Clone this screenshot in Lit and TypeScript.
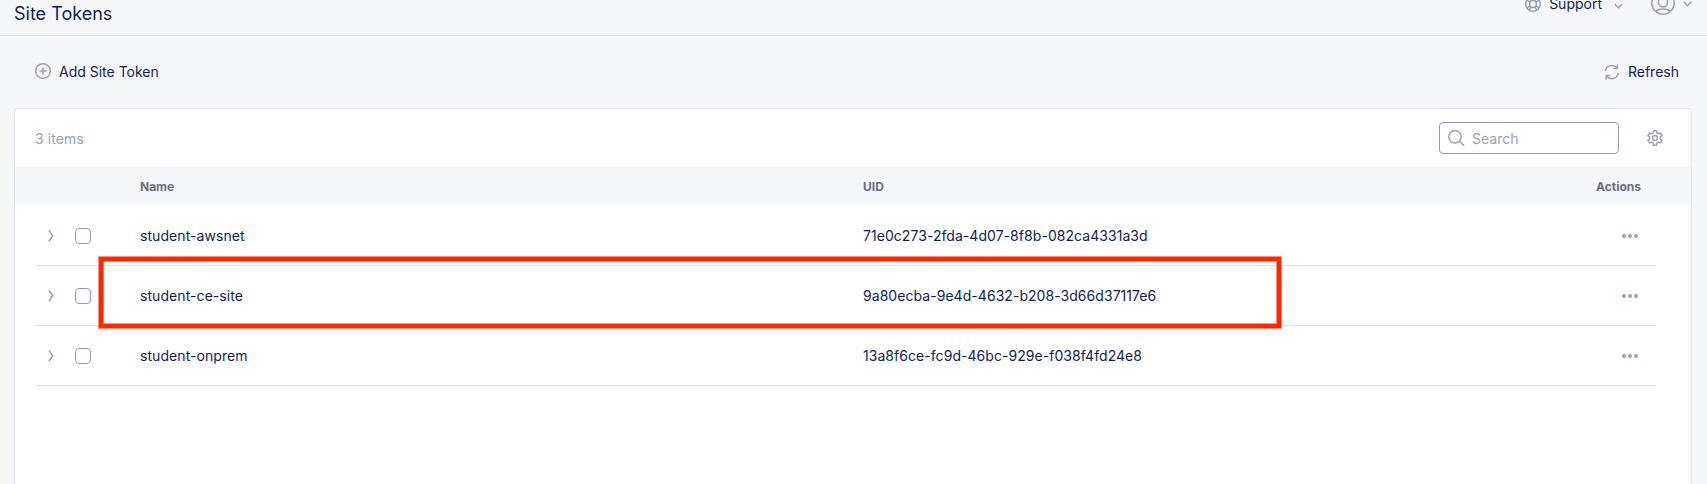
import { LitElement, html, css, svg } from "lit";
import { customElement, property } from "lit/decorators.js";

interface Token {
  name: string;
  uid: string;
}

const TOKENS: Token[] = [
  { name: "student-awsnet", uid: "71e0c273-2fda-4d07-8f8b-082ca4331a3d" },
  { name: "student-ce-site", uid: "9a80ecba-9e4d-4632-b208-3d66d37117e6" },
  { name: "student-onprem", uid: "13a8f6ce-fc9d-46bc-929e-f038f4fd24e8" },
];

// Outline of the six-toothed settings gear, centred on (8, 8).
function gearPath(): string {
  const teeth = 6;
  const pts: string[] = [];
  for (let i = 0; i < teeth; i++) {
    const mid = (i / teeth) * 360 - 90;
    for (const [off, r] of [[-19, 5.5], [-12, 7.4], [12, 7.4], [19, 5.5]]) {
      const a = ((mid + off) * Math.PI) / 180;
      pts.push(`${(8 + r * Math.cos(a)).toFixed(2)} ${(8 + r * Math.sin(a)).toFixed(2)}`);
    }
  }
  return `M${pts.join("L")}Z`;
}

const ICONS = {
  plus: svg`<circle cx="8" cy="8" r="7.3"/><path d="M8 4.4v7.2M4.4 8h7.2"/>`,
  support: svg`<circle cx="8" cy="8" r="7.3"/><circle cx="8" cy="8" r="3.4"/>
    <path d="M4.2 2l2 3.1M2 4.2l3.1 2M11.8 2l-2 3.1M14 4.2l-3.1 2M4.2 14l2-3.1M2 11.8l3.1-2M11.8 14l-2-3.1M14 11.8l-3.1-2"/>`,
  user: svg`<circle cx="12" cy="12" r="11.2"/><path d="M7.6 8.4a4.4 4.4 0 0 1 8.8 0v3.2a4.4 4.4 0 0 1-8.8 0zM4.6 20.3c2-1.6 4.2-2.2 7.4-2.2s5.4.6 7.4 2.2"/>`,
  down: svg`<path d="M.8 1l3.7 3.7L8.2 1"/>`,
  refresh: svg`<path d="M1.2 7A6.6 6.6 0 0 1 12.9 4.2M13.2.5v4.1H9.2M14.3 9A6.6 6.6 0 0 1 2.4 11.8M2.1 15.6v-4.1h4"/>`,
  search: svg`<circle cx="7" cy="6.8" r="6.2"/><path d="M11.5 11.3l4.4 4.3"/>`,
  gear: svg`<path d="${gearPath()}"/><circle cx="8" cy="8" r="2.4"/>`,
  right: svg`<path d="M.9.4l3.8 5.4L.9 11.2"/>`,
  dots: svg`<g fill="currentColor" stroke="none"><circle cx="2" cy="2" r="2"/><circle cx="8" cy="2" r="2"/><circle cx="14" cy="2" r="2"/></g>`,
};

function icon(name: keyof typeof ICONS, w: number, h: number) {
  return html`<svg class="icon icon-${name}" width=${w} height=${h} viewBox="0 0 ${w} ${h}">${ICONS[name]}</svg>`;
}

const shared = css`
  * { box-sizing: border-box; }
  .icon {
    display: block;
    flex: none;
    fill: none;
    stroke: currentColor;
    stroke-width: 1.5;
    stroke-linejoin: round;
    color: #98a2b8;
    overflow: visible;
  }
`;

@customElement("token-table")
class TokenTable extends LitElement {
  @property({ attribute: false }) tokens: Token[] = [];
  @property() highlighted = "";

  static styles = [
    shared,
    css`
      :host { display: block; }
      .grid {
        display: grid;
        grid-template-columns: 40px 65px 723px 1fr 100px;
        align-items: center;
      }
      .head {
        height: 38px;
        padding: 2px 35px 0 20px;
        background: #f5f6f9;
        color: #667085;
        font-size: 12px;
        font-weight: 700;
        line-height: 16px;
      }
      .head .last { padding-right: 15px; text-align: right; }
      .body { margin: 0 35px 0 20px; padding-top: 1px; }
      .row {
        position: relative;
        height: 60px;
        border-bottom: 1px solid #e2e4f0;
        color: #0f1e57;
        font-size: 14px;
        line-height: 20px;
      }
      .expand { padding-left: 13px; }
      .check {
        width: 16px;
        height: 16px;
        border: 1px solid #8f9bb3;
        border-radius: 4px;
      }
      .actions { display: flex; justify-content: flex-end; padding-right: 18px; }
      .mark {
        position: absolute;
        left: 64px;
        top: -9px;
        width: 1182px;
        height: 71px;
        border: 4px solid #ff2600;
        box-shadow: 0 0 0 1px #ff260080, inset 0 0 0 1px #ff260080;
        z-index: 1;
      }
      .name { letter-spacing: 0.07px; }
      .uid { letter-spacing: 0.05px; }
    `,
  ];

  render() {
    return html`
      <div class="grid head">
        <span></span><span></span><span>Name</span><span>UID</span><span class="last">Actions</span>
      </div>
      <div class="body">
        ${this.tokens.map(
          (t) => html`<div class="grid row">
            <span class="expand">${icon("right", 6, 12)}</span>
            <span class="check"></span>
            <span class="name">${t.name}</span>
            <span class="uid">${t.uid}</span>
            <span class="actions">${icon("dots", 16, 4)}</span>
            ${t.name === this.highlighted ? html`<div class="mark"></div>` : null}
          </div>`
        )}
      </div>
    `;
  }
}

@customElement("app-root")
class AppRoot extends LitElement {
  static styles = [
    shared,
    css`
      :host {
        display: flex;
        flex-direction: column;
        height: 484px;
        overflow: hidden;
        background: #f6f7f9;
        color: #0f1e57;
        font-family: Inter, sans-serif;
        font-size: 14px;
        line-height: 20px;
      }
      .top {
        display: flex;
        justify-content: space-between;
        height: 36px;
        flex: none;
        padding: 0 15px 0 14px;
        border-bottom: 1px solid #dfe2e9;
      }
      h1 { margin: 2px 0 0; font-size: 18px; font-weight: 400; line-height: 24px; }
      .account { display: flex; align-items: center; height: 20px; margin-top: -6px; }
      .account .label { margin: 0 12px 0 8px; }
      .account .profile { display: flex; align-items: center; gap: 8px; margin: -2px 0 0 28px; }
      .account .profile .icon-down { margin-top: 1px; }
      .account > .icon-down { margin-top: 3px; }
      .tools {
        display: flex;
        justify-content: space-between;
        align-items: center;
        height: 72px;
        flex: none;
        padding: 0 28px 0 35px;
      }
      .tool { display: flex; align-items: center; gap: 8px; }
      .tool .icon { margin-top: -2px; }
      .tool .icon-refresh { margin: 0 1px 0 0; }
      .card {
        flex: 1;
        margin: 0 15px 0 14px;
        background: #fff;
        border: 1px solid #e1e4f0;
        border-bottom: 0;
        border-radius: 4px 4px 0 0;
      }
      .bar { display: flex; align-items: center; height: 58px; padding: 0 28px 0 20px; }
      .count { flex: 1; padding-top: 2px; color: #98a2b8; letter-spacing: 0.1px; }
      .search {
        display: flex;
        align-items: center;
        gap: 8px;
        width: 180px;
        height: 32px;
        margin-right: 28px;
        padding: 0 8px;
        border: 1px solid #8f9bb3;
        border-radius: 4px;
        color: #98a2b8;
      }
      .search span { padding-top: 2px; }
    `,
  ];

  render() {
    return html`
      <header class="top">
        <h1>Site Tokens</h1>
        <div class="account">
          ${icon("support", 16, 16)}<span class="label">Support</span>${icon("down", 9, 6)}
          <div class="profile">${icon("user", 24, 24)}${icon("down", 9, 6)}</div>
        </div>
      </header>
      <div class="tools">
        <div class="tool">${icon("plus", 16, 16)}<span>Add Site Token</span></div>
        <div class="tool">${icon("refresh", 15, 16)}<span>Refresh</span></div>
      </div>
      <main class="card">
        <div class="bar">
          <span class="count">3 items</span>
          <div class="search">${icon("search", 16, 16)}<span>Search</span></div>
          ${icon("gear", 16, 16)}
        </div>
        <token-table .tokens=${TOKENS} highlighted="student-ce-site"></token-table>
      </main>
    `;
  }
}
